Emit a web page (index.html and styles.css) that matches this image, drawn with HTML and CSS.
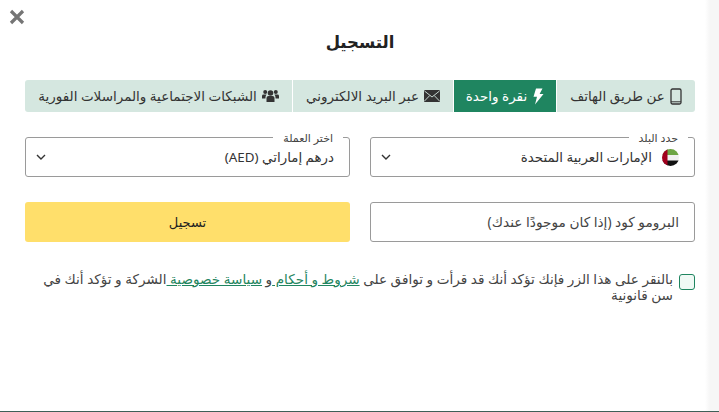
FILE: index.html
```html
<!DOCTYPE html>
<html lang="ar" dir="rtl">
<head>
	<meta charset="utf-8">
	<title>التسجيل</title>
	<link rel="stylesheet" href="styles.css">
</head>
<body>
	<div class="modal">
		<button type="button" class="close_btn" aria-label="close">
			<svg width="16" height="16" viewBox="0 0 16 16"><path d="M2 2 L14 14 M14 2 L2 14" stroke="#757575" stroke-width="3.2" fill="none"/></svg>
		</button>
		<h1>التسجيل</h1>

		<div class="tabs">
			<div class="tab tab_phone">
				<svg width="12" height="17" viewBox="0 0 12 17"><rect x="1" y="1" width="10" height="15" rx="1.5" fill="none" stroke="#333" stroke-width="1.3"/><path d="M1 13.8 H11" stroke="#333" stroke-width="1"/></svg>
				عن طريق الهاتف
			</div>
			<div class="tab tab_active tab_click">
				<svg width="12" height="17" viewBox="0 0 12 17"><path d="M4 0.5 H10.5 L7.6 6 H11.5 L3 16.5 L5 8.8 H1.5 Z" fill="#fff"/></svg>
				نقرة واحدة
			</div>
			<div class="tab tab_email">
				<svg width="16" height="12" viewBox="0 0 16 12"><rect x="0" y="0" width="16" height="12" rx="1" fill="#333"/><path d="M0.5 1 L8 7 L15.5 1 M0.5 11 L5.8 5.5 M15.5 11 L10.2 5.5" stroke="#d5e7e0" stroke-width="0.9" fill="none"/></svg>
				عبر البريد الالكتروني
			</div>
			<div class="tab tab_social">
				<svg width="17" height="14" viewBox="0 0 17 14"><circle cx="8.5" cy="4" r="2.8" fill="#333"/><circle cx="3.2" cy="3" r="2" fill="#333"/><circle cx="13.8" cy="3" r="2" fill="#333"/><path d="M4.5 13 V9 Q4.5 7 6.5 7 H10.5 Q12.5 7 12.5 9 V13 Z" fill="#333"/><path d="M0 9.5 V7 Q0 5.6 1.5 5.6 H4.6 Q3.4 6.8 3.4 9.5 Z M17 9.5 V7 Q17 5.6 15.5 5.6 H12.4 Q13.6 6.8 13.6 9.5 Z" fill="#333"/></svg>
				الشبكات الاجتماعية والمراسلات الفورية
			</div>
		</div>

		<div class="form_row row_selects">
			<fieldset class="field">
				<legend>حدد البلد</legend>
				<div class="field_value">
					<svg class="flag" width="17" height="17" viewBox="0 0 17 17">
						<defs><clipPath id="flag_clip"><circle cx="8.5" cy="8.5" r="8.5"/></clipPath></defs>
						<g clip-path="url(#flag_clip)">
							<rect width="17" height="6" fill="#6da544"/>
							<rect y="6" width="17" height="5.5" fill="#f0f0f0"/>
							<rect y="11.5" width="17" height="5.5" fill="#111"/>
							<rect width="5.5" height="17" fill="#a2001d"/>
						</g>
					</svg>
					<span>الإمارات العربية المتحدة</span>
				</div>
				<svg class="chevron" width="10" height="6" viewBox="0 0 10 6"><path d="M1 1 L5 5 L9 1" stroke="#333" stroke-width="1.4" fill="none"/></svg>
			</fieldset>
			<fieldset class="field">
				<legend>اختر العملة</legend>
				<div class="field_value"><span>درهم إماراتي (AED)</span></div>
				<svg class="chevron" width="10" height="6" viewBox="0 0 10 6"><path d="M1 1 L5 5 L9 1" stroke="#333" stroke-width="1.4" fill="none"/></svg>
			</fieldset>
		</div>

		<div class="form_row row_actions">
			<div class="promo">البرومو كود (إذا كان موجودًا عندك)</div>
			<button type="button" class="submit_btn">تسجيل</button>
		</div>

		<div class="terms">
			<span class="check_box"></span>
			<p>بالنقر على هذا الزر فإنك تؤكد أنك قد قرأت و توافق على <a href="#">شروط و أحكام </a>و <a href="#">سياسة خصوصية </a>الشركة و تؤكد أنك في<br>سن قانونية</p>
		</div>
	</div>
</body>
</html>
```

FILE: styles.css
```css
html, body {
	margin: 0;
	height: 100%;
}
body {
	overflow: hidden;
	background: #fff;
	font-family: "Noto Sans", "Open Sans", "DejaVu Sans", sans-serif;
	color: #333;
}
.modal {
	position: relative;
	box-sizing: border-box;
	width: 719px;
	height: 412px;
	padding: 0 24px 0 25px;
	border-bottom: 1px solid #3f5f57;
	background: linear-gradient(to right, #fff 705px, #f6f6f6 710px);
}
.close_btn {
	position: absolute;
	top: 9px;
	left: 9px;
	padding: 0;
	border: 0;
	background: none;
	line-height: 0;
}
h1 {
	margin: 0;
	padding-top: 27px;
	height: 53px;
	font-size: 16.5px;
	line-height: 30px;
	font-weight: 700;
	text-align: center;
	color: #222;
}
.tabs {
	display: flex;
	height: 32px;
	border-radius: 3px;
	overflow: hidden;
}
.tab {
	display: flex;
	align-items: center;
	justify-content: center;
	gap: 5px;
	background: #d5e7e0;
	font-size: 13.5px;
	color: #333;
	border-left: 1px solid #fff;
	box-sizing: border-box;
	white-space: nowrap;
}
.tab:last-child { border-left: 0; }
.tab_active {
	background: #1f8560;
	color: #fff;
}
.tab_phone { width: 139px; }
.tab_click { width: 103px; }
.tab_email { width: 161px; }
.tab_social { width: 267px; }
.form_row {
	display: grid;
	grid-template-columns: 1fr 1fr;
	gap: 20px;
}
.row_selects { margin-top: 19px; }
.row_actions { margin-top: 25px; }
.field {
	position: relative;
	margin: 0;
	padding: 0 15px;
	height: 46px;
	box-sizing: border-box;
	border: 1px solid #9a9a9a;
	border-radius: 3px;
	min-width: 0;
}
.field legend {
	padding: 0 10px;
	margin-right: -9px;
	font-size: 11px;
	line-height: 13px;
	color: #444;
}
.field_value {
	display: flex;
	align-items: center;
	gap: 10px;
	height: 26px;
	font-size: 13.4px;
	color: #333;
}
.chevron {
	position: absolute;
	left: 10px;
	top: 10px;
}
.promo {
	box-sizing: border-box;
	height: 40px;
	padding: 0 15px;
	border: 1px solid #9a9a9a;
	border-radius: 3px;
	font-size: 13.7px;
	line-height: 38px;
	color: #444;
}
.submit_btn {
	height: 40px;
	padding: 0;
	border: 0;
	border-radius: 3px;
	background: #ffdf6b;
	font-family: inherit;
	font-size: 13px;
	color: #222;
}
.terms {
	display: flex;
	align-items: flex-start;
	gap: 6px;
	margin-top: 29px;
}
.check_box {
	flex: none;
	width: 16px;
	height: 16px;
	margin-top: 3px;
	box-sizing: border-box;
	border: 1px solid #1f8560;
	border-radius: 3px;
	background: #f0f9f5;
}
.terms p {
	margin: 0;
	font-size: 13.6px;
	line-height: 16px;
	color: #444;
}
.terms a {
	color: #1f8560;
	text-decoration: underline;
}
```
